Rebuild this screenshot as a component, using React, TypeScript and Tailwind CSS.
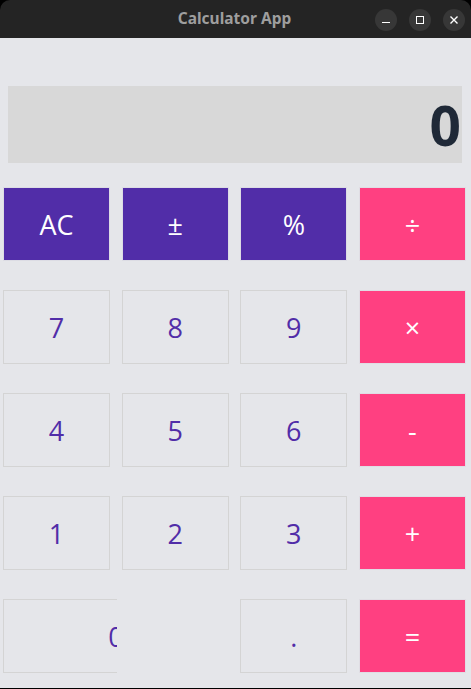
import React from "react";

const numCls =
  "h-[74px] border border-[#d4d4d4] bg-[#e5e6ea] text-[#512da8] text-[27px] pt-[3px] flex items-center justify-center";
const purpleCls =
  "h-[74px] border border-[#dcdce4] bg-[#512da8] text-white text-[27px] pt-[3px] flex items-center justify-center";
const pinkCls =
  "h-[74px] border border-[#e0dde4] bg-[#ff4081] text-white text-[27px] pt-[3px] flex items-center justify-center";

export default function App() {
  return (
    <div
      className="w-[471px] h-[689px] bg-black flex flex-col overflow-hidden"
      style={{ fontFamily: "'Open Sans', 'Noto Sans', sans-serif" }}
    >
      <div className="h-[38px] bg-[#242424] rounded-t-[10px] relative flex items-center justify-center shrink-0">
        <span
          className="text-[#9e9e9e] text-[15.5px] font-bold ml-[-2px]"
          style={{ fontFamily: "'Noto Sans', 'Open Sans', sans-serif" }}
        >
          Calculator App
        </span>
        <div className="absolute right-[6px] top-[9px] flex gap-[12px]">
          <div className="w-[22px] h-[22px] rounded-full bg-[#373737] flex items-center justify-center">
            <div className="w-[8px] h-[1.5px] bg-white mt-[5px]" />
          </div>
          <div className="w-[22px] h-[22px] rounded-full bg-[#373737] flex items-center justify-center">
            <div className="w-[8px] h-[8px] border border-white" />
          </div>
          <div className="w-[22px] h-[22px] rounded-full bg-[#373737] flex items-center justify-center">
            <svg width="10" height="10" viewBox="0 0 10 10">
              <path d="M1.5 1.5 L8.5 8.5 M8.5 1.5 L1.5 8.5" stroke="white" strokeWidth="1.4" />
            </svg>
          </div>
        </div>
      </div>
      <div className="flex-1 bg-[#e5e6ea] mb-[1px] flex flex-col">
        <div className="mt-[48px] ml-[8px] mr-[9px] h-[77px] bg-[#d8d8d8] flex items-center justify-end pr-[1px]">
          <span className="text-[55px] font-bold text-[#1f2937] leading-none">0</span>
        </div>
        <div className="mt-[24px] pl-[3px] pr-[5px] grid grid-cols-4 gap-x-[11.5px] gap-y-[29px]">
          <button className={purpleCls}>AC</button>
          <button className={purpleCls}>±</button>
          <button className={purpleCls}>%</button>
          <button className={pinkCls}>÷</button>
          <button className={numCls}>7</button>
          <button className={numCls}>8</button>
          <button className={numCls}>9</button>
          <button className={pinkCls}>×</button>
          <button className={numCls}>4</button>
          <button className={numCls}>5</button>
          <button className={numCls}>6</button>
          <button className={pinkCls}>-</button>
          <button className={numCls}>1</button>
          <button className={numCls}>2</button>
          <button className={numCls}>3</button>
          <button className={pinkCls}>+</button>
          <div className="col-span-2 h-[74px] overflow-hidden">
            <div className="w-[114px] h-[74px] overflow-hidden">
              <button className={numCls + " w-[226px]"}>0</button>
            </div>
          </div>
          <button className={numCls}>.</button>
          <button className={pinkCls}>=</button>
        </div>
      </div>
    </div>
  );
}
